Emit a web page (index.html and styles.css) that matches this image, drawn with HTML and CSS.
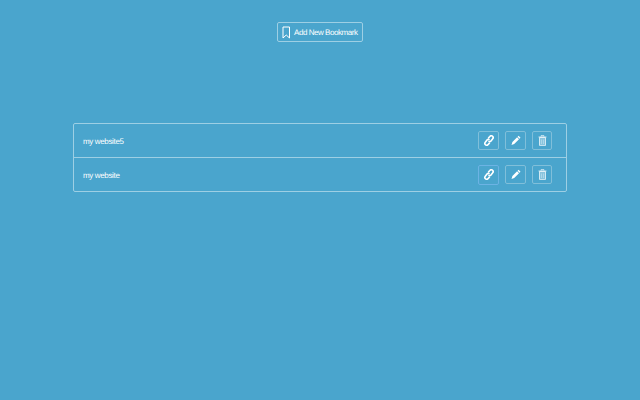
FILE: index.html
```html
<!DOCTYPE html>
<html>
<head>
<meta charset="utf-8">
<link rel="stylesheet" href="styles.css">
</head>
<body>
<div class="top">
  <button class="add">
    <svg class="bm" width="9" height="13" viewBox="0 0 9 13"><path d="M1 1h6.500v11L4.250 9 1 12z" fill="none" stroke="#fff" stroke-width="1"/></svg>
    <span>Add New Bookmark</span>
  </button>
</div>
<ul class="list">
  <li class="row">
    <span class="name">my website5</span>
    <div class="actions">
      <button class="btn link"><svg width="10" height="11" viewBox="0 0 10 11"><path d="M4.300 3.300 5.800 1.500a1.800 1.800 0 0 1 2.900 2.300L7 5.900a1.800 1.800 0 0 1-2.500.3M5.700 7.700 4.200 9.500a1.800 1.800 0 0 1-2.900-2.300L3 5.100a1.800 1.800 0 0 1 2.500-.3" fill="none" stroke="#fff" stroke-width="1.600"/></svg></button>
      <button class="btn edit"><svg width="10" height="11" viewBox="0 0 10 11"><path d="M7.600.8 9.500 2.700 8.500 3.700 6.600 1.800zM6.100 2.300 8 4.200 3.200 9 .5 10l.9-2.900z" fill="#fff"/></svg></button>
      <button class="btn del"><svg width="9" height="11" viewBox="0 0 9 11"><path d="M3 1.500V.7h3v.8M.5 2h8" fill="none" stroke="#fff" stroke-opacity=".7"/><path d="M1.500 2.500h6v7.700a.5.5 0 0 1-.5.500H2a.5.5 0 0 1-.5-.5z" fill="#fff" fill-opacity=".35" stroke="#fff" stroke-opacity=".7"/><path d="M3.500 4.500v4.500M5.500 4.500v4.500" stroke="#fff" stroke-opacity=".3"/></svg></button>
    </div>
  </li>
  <li class="row">
    <span class="name">my website</span>
    <div class="actions">
      <button class="btn link active"><svg width="10" height="11" viewBox="0 0 10 11"><path d="M4.300 3.300 5.800 1.500a1.800 1.800 0 0 1 2.900 2.300L7 5.900a1.800 1.800 0 0 1-2.500.3M5.700 7.700 4.200 9.500a1.800 1.800 0 0 1-2.900-2.300L3 5.100a1.800 1.800 0 0 1 2.500-.3" fill="none" stroke="#fff" stroke-width="1.600"/></svg></button>
      <button class="btn edit"><svg width="10" height="11" viewBox="0 0 10 11"><path d="M7.600.8 9.500 2.700 8.500 3.700 6.600 1.800zM6.100 2.300 8 4.200 3.200 9 .5 10l.9-2.900z" fill="#fff"/></svg></button>
      <button class="btn del"><svg width="9" height="11" viewBox="0 0 9 11"><path d="M3 1.500V.7h3v.8M.5 2h8" fill="none" stroke="#fff" stroke-opacity=".7"/><path d="M1.500 2.500h6v7.700a.5.5 0 0 1-.5.500H2a.5.5 0 0 1-.5-.5z" fill="#fff" fill-opacity=".35" stroke="#fff" stroke-opacity=".7"/><path d="M3.500 4.500v4.500M5.500 4.500v4.500" stroke="#fff" stroke-opacity=".3"/></svg></button>
    </div>
  </li>
</ul>
</body>
</html>
```
FILE: styles.css
```css
html, body {
  margin: 0;
  padding: 0;
  height: 100%;
  background: #4aa5cd;
  font-family: "Liberation Sans", Arial, sans-serif;
  color: #fff;
  overflow: hidden;
  text-rendering: geometricPrecision;
}
.top {
  display: flex;
  justify-content: center;
  padding-top: 22px;
}
.add {
  display: flex;
  align-items: center;
  gap: 3px;
  height: 20px;
  width: 86px;
  padding: 0 0 0 4px;
  margin: 0;
  box-sizing: border-box;
  background: transparent;
  border: 1px solid #9dcfe4;
  border-radius: 2px;
  color: #fff;
  font: 8px "Liberation Sans", Arial, sans-serif;
  letter-spacing: -0.45px;
  text-rendering: geometricPrecision;
  white-space: nowrap;
}
.bm { flex: none; }
.list {
  list-style: none;
  margin: 81px 0 0 73px;
  padding: 0;
  width: 494px;
  box-sizing: border-box;
  border: 1px solid #9dcfe4;
  border-radius: 2px;
}
.row {
  display: flex;
  align-items: center;
  justify-content: space-between;
  height: 33px;
  padding: 0 14px 0 9px;
  font-size: 8px;
  letter-spacing: -0.35px;
}
.row + .row {
  border-top: 1px solid #9dcfe4;
}
.name {
  padding-top: 1px;
}
.actions {
  display: flex;
  gap: 6px;
}
.btn {
  display: flex;
  align-items: center;
  justify-content: center;
  height: 19px;
  padding: 0;
  margin: 0;
  box-sizing: border-box;
  background: transparent;
  border: 1px solid #80bfda;
  border-radius: 2px;
}
.link, .edit { width: 21px; }
.del { width: 20px; }
.active { height: 20px; border-color: #6cb3e4; }
```
